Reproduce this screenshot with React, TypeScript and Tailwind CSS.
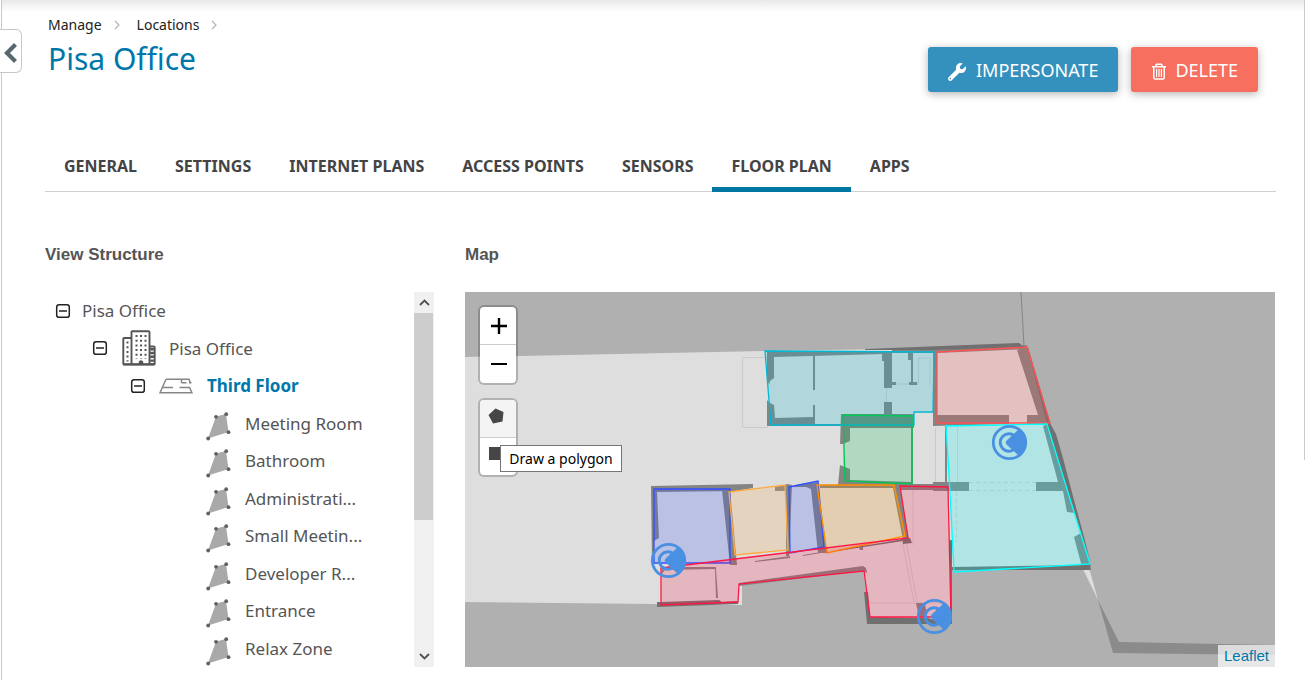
import React from 'react';
import { FaWrench } from 'react-icons/fa';

const tabs = [
  'General',
  'Settings',
  'Internet Plans',
  'Access Points',
  'Sensors',
  'Floor Plan',
  'Apps',
];

const rooms = [
  'Meeting Room',
  'Bathroom',
  'Administrati...',
  'Small Meetin...',
  'Developer R...',
  'Entrance',
  'Relax Zone',
];

// room outlines, in floor plan units
const areas = [
  { color: '#00b8d4', points: '765,351 934,352 933,412 914,412 914,425 771,425' },
  { color: '#00c853', points: '843,415 912,416 912,484 845,481' },
  { color: '#ff5252', points: '937,352 1027,347 1050,423 937,423' },
  { color: '#00ffff', points: '946,426 1047,424 1090,564 954,572 950,492' },
  { color: '#304ffe', points: '654,489 730,489 730,563 654,563' },
  { color: '#ffab40', points: '729,492 785,485 788,550 735,555' },
  { color: '#304ffe', points: '789,487 818,481 824,547 790,553' },
  { color: '#ff9100', points: '817,485 894,485 905,536 827,553' },
  {
    color: '#ff1744',
    points:
      '661,568 908,538 900,486 948,487 951,617 870,617 864,571 739,584 738,602 661,605',
  },
];

const walls = [
  // north-west block
  '767,351 884,351 884,354 774,357 774,378 770,381 769,385 767,378',
  '767,400 770,403 774,405 775,418 813,417 815,426 767,426',
  '813,356 815,356 815,390 813,390',
  '813,405 815,405 815,426 813,426',
  '815,424 845,424 845,426 815,426',
  '882,352 892,352 892,388 884,388 884,361 882,361',
  '884,402 892,402 892,416 884,416',
  '892,350 937,349 937,353 892,353',
  '908,353 913,353 913,385 917,385 917,383 909,383 911,383 911,360 908,360',
  '892,382 896,382 896,385 892,385',
  '909,382 917,382 917,385 909,385',
  // bathroom block
  '841,414 914,414 914,428 850,428 850,441 843,444 840,444',
  '840,465 845,467 850,469 850,480 912,482 912,486 838,485',
  '911,428 913,428 913,484 911,484',
  // north-east block
  '933,350 1027,345 1027,349 937,353 937,415 1009,415 1009,424 933,426',
  '1017,350 1027,347 1050,422 1050,425 1027,424 1027,415 1038,415',
  '945,426 947,426 947,484 945,484',
  '933,482 969,482 969,491 933,491',
  '1043,426 1048,424 1075,513 1067,512 1063,491 1036,491 1036,482 1058,482',
  '1074,537 1081,533 1091,566 1082,567',
  // south-west block
  '651,486 753,484 753,488 735,491 657,492 659,538 654,541 654,563 652,563',
  '722,490 730,489 737,565 730,565',
  '775,487 788,484 792,485 789,556 786,556 786,491 775,491',
  '789,487 800,484 818,482 827,553 818,553 811,489 806,487',
  '820,485 900,484 900,488 909,540 903,540 893,488 820,488',
  '900,484 948,484 948,490 900,490',
  // corridor
  '663,567 716,567 716,569 665,570 661,575',
  '715,569 716,569 718,598 716,598',
  '755,561 790,556 790,558 755,562',
  '803,555 827,551 827,552 803,556',
  '859,547 863,547 863,550 860,550',
  '916,603 925,603 927,617 919,617',
  '739,583 863,566 866,568 867,573 862,571 739,586',
];

const darkWalls = [
  '865,349 1019,343 1024,347 937,350 865,350',
  '1027,347 1028,347 1051,425 1056,434 1063,458 1074,500 1083,533 1091,564 1047,424',
  '951,567 1090,565 1091,570 952,570',
  '657,602 661,602 719,600 722,602 738,601 738,604 657,607',
  '864,592 868,592 870,617 928,618 940,621 952,618 952,624 867,624',
  '950,540 952,540 952,620 950,620',
  '838,550 910,538 912,543 903,544 903,541 838,551',
];

const markers = [
  [1009, 442],
  [668, 560],
  [934, 616],
];

const ToggleIcon: React.FC = () => (
  <svg className="size-4" viewBox="0 0 16 16" fill="none" stroke="#222">
    <rect x="1.7" y="1.7" width="12.6" height="12.6" rx="2.4" strokeWidth="1.5" />
    <path d="M4 8h8" strokeWidth="1.5" />
  </svg>
);

const BuildingIcon: React.FC = () => (
  <svg className="h-9 w-[34px]" viewBox="0 0 34 36" fill="none" stroke="#555">
    <path
      d="M9.5 34V2.2q0-1 1-1h16q1 0 1 1V34M9.5 8H2.3q-1 0-1 1v24.5q0 1 1 1h29.4q1 0 1-1V17.5q0-1-1-1h-4.2M9.5 8v26"
      strokeWidth="1.9"
    />
    <path d="M14.5 5v24M19 5v24M23.5 5v24" strokeWidth="2" strokeDasharray="2 2.7" />
    <path d="M5.5 11.5v20" strokeWidth="2" strokeDasharray="2 2.7" />
    <path d="M30 18v16" strokeWidth="3.8" strokeDasharray="2.4 1.4" />
    <path d="M17 34.5v-3q2-2 4 0v3z" fill="#555" strokeWidth="0.5" />
    <path d="M1 34.3h32" strokeWidth="2" />
  </svg>
);

const FloorIcon: React.FC = () => (
  <svg className="h-4 w-[34px]" viewBox="0 0 34 16" fill="none" stroke="#858585">
    <path
      d="M7 1.2H30l1.5 4M7 1.2L1 14.8h32l-2.5-5.3H20.5M4 9.5h10M22.5 1.2v3.5M22.5 4.8h5M30 4.8h2.5"
      strokeWidth="1.5"
    />
  </svg>
);

const RoomIcon: React.FC = () => (
  <svg className="h-[29px] w-[26px]" viewBox="0 0 26 29">
    <path d="M10 4.5L20 2l2.5 18L2 26.5z" fill="#a9a9a9" />
    <g fill="#606060">
      <circle cx="10" cy="4.8" r="1.9" />
      <circle cx="20.2" cy="2.2" r="1.9" />
      <circle cx="22.5" cy="20.2" r="1.9" />
      <circle cx="2.2" cy="26.5" r="1.9" />
    </g>
  </svg>
);

const TrashIcon: React.FC = () => (
  <svg className="h-[17px] w-4" viewBox="0 0 16 17" fill="none" stroke="white">
    <path d="M1 3.8h14M5 3.5V2.3q0-1 1-1h4q1 0 1 1v1.2" strokeWidth="1.6" />
    <path d="M2.8 4v10.7q0 1.4 1.4 1.4h7.6q1.4 0 1.4-1.4V4" strokeWidth="1.5" />
    <path d="M5.6 6v8M8 6v8M10.4 6v8" strokeWidth="1.2" />
  </svg>
);

const Crumb: React.FC<{ text: string }> = ({ text }) => (
  <li className="flex items-center">
    <a href="#">{text}</a>
    <svg className="ml-3 mr-[17px] h-2.5 w-1.5" viewBox="0 0 6 10" fill="none" stroke="#b5b5b5">
      <path d="M1 1l4 4-4 4" strokeWidth="1.2" />
    </svg>
  </li>
);

const FloorMap: React.FC = () => (
  <svg
    className="block h-full w-full"
    viewBox="465 292 810 375"
    preserveAspectRatio="xMinYMin slice"
    role="img"
    aria-label="Third floor plan"
  >
    <rect x="465" y="292" width="1600" height="375" fill="#b0b0b0" />
    <path d="M1021 292l3 54" stroke="#858585" />
    <polygon
      points="465,357 765,351 1026,347 1090,566 1084,569 952,570 952,622 870,622 863,569 742,584 742,605 655,604 465,602"
      fill="#dedede"
    />
    <polygon points="1083,569 1089,568 1098,600" fill="#dedede" />
    <polygon points="1098,600 1119,642 1275,645 1275,655 1113,653" fill="#8b8b8b" />
    <g fill="none" stroke="#cacaca">
      <path d="M768 357.5H742.5v70H768" />
      <path d="M918.5 385v-27H930v27M935.5 428v54M957.5 427v55" />
      <path d="M969 482.5h67M969 490.5h67M956.5 492v50" strokeDasharray="4 3" />
      <path d="M902 540l12 62M906 540l11 62M869 603h78M913 490v55" />
      <path d="M896 384h13M886.5 388v14M843.5 444v22" />
    </g>
    <g fill="#848484">
      {walls.map((points) => (
        <polygon key={points} points={points} />
      ))}
    </g>
    <g fill="#707070">
      {darkWalls.map((points) => (
        <polygon key={points} points={points} />
      ))}
    </g>
    {areas.map((area) => (
      <polygon
        key={area.points}
        points={area.points}
        fill={area.color}
        fillOpacity="0.2"
        stroke={area.color}
        strokeWidth="1.3"
      />
    ))}
    {markers.map(([x, y]) => (
      <g key={x} transform={`translate(${x} ${y})`} fill="none" stroke="#4a90e2">
        <circle cx="0.5" cy="0.5" r="16.2" strokeWidth="2.8" />
        <path d="M5.5-6.2A8.7 8.7 0 1 0 5.5 7.2" strokeWidth="3" />
        <path
          d="M-1.8-1.7L10.5-13A17 17 0 0 1 10.5 14L-1.8 2.7Q-4 0.5-1.8-1.7z"
          fill="#4a90e2"
          strokeWidth="0.8"
        />
      </g>
    ))}
  </svg>
);

const MapControls: React.FC = () => (
  <div className="absolute left-[13px] top-[13px] flex flex-col gap-[13px]">
    <div className="flex flex-col rounded-md border-2 border-black/20 bg-white bg-clip-padding">
      <button
        aria-label="Zoom in"
        className="flex h-[38px] w-9 items-center justify-center border-b border-[#ccc]"
      >
        <svg className="ml-0.5 size-4" viewBox="0 0 16 16" stroke="black" strokeWidth="2.4">
          <path d="M0 8h16M8 0v16" />
        </svg>
      </button>
      <button aria-label="Zoom out" className="flex h-[38px] w-9 items-center justify-center">
        <svg className="ml-0.5 size-4" viewBox="0 0 16 16" stroke="black" strokeWidth="2">
          <path d="M0 8h16" />
        </svg>
      </button>
    </div>
    <div className="relative flex flex-col rounded-md border-2 border-black/20 bg-white bg-clip-padding">
      <button
        aria-label="Draw a polygon"
        className="flex h-[38px] w-9 items-center rounded-t border-b border-[#ccc] bg-[#f4f4f4] pl-2"
      >
        <svg className="mb-1.5 size-4" viewBox="0 0 16 16" fill="#464646">
          <path d="M7.5 0.5L15.5 4l-1 9.5L5 15.5 0.5 7z" />
        </svg>
      </button>
      <button
        aria-label="Draw a rectangle"
        className="flex h-[37px] w-9 items-center pl-2"
      >
        <svg className="mb-1.5 size-4" viewBox="0 0 16 16" fill="#464646">
          <rect x="1" y="1" width="13" height="13" />
        </svg>
      </button>
      <div
        role="tooltip"
        className="absolute left-5 top-[45px] flex h-[27px] w-[122px] items-center justify-center whitespace-nowrap border border-[#767676] bg-white text-[14px] text-black"
      >
        Draw a polygon
      </div>
    </div>
  </div>
);

const StructureTree: React.FC = () => (
  <div className="flex h-[375px]">
    <ul className="grid flex-1 auto-rows-fr text-[17px] text-[#555]">
      <li className="flex items-center pl-2.5">
        <button aria-label="Collapse Pisa Office location" className="mr-[11px]">
          <ToggleIcon />
        </button>
        Pisa Office
      </li>
      <li className="flex items-center pl-[47px]">
        <button aria-label="Collapse Pisa Office building" className="mr-3.5">
          <ToggleIcon />
        </button>
        <BuildingIcon />
        <span className="ml-[13px]">Pisa Office</span>
      </li>
      <li className="flex items-center pl-[85px]">
        <button aria-label="Collapse Third Floor" className="mr-[13px]">
          <ToggleIcon />
        </button>
        <FloorIcon />
        <a href="#" className="ml-3.5 font-bold text-[#0077ab]">
          Third Floor
        </a>
      </li>
      {rooms.map((room) => (
        <li key={room} className="flex items-center pl-[161px]">
          <span className="mt-1.5">
            <RoomIcon />
          </span>
          <span className="ml-[13px]">{room}</span>
        </li>
      ))}
    </ul>
    {/* scrollbar */}
    <div className="flex w-5 flex-col bg-[#f0f0f0]">
      <button aria-label="Scroll up" className="flex h-[21px] items-center justify-center">
        <svg className="h-[7px] w-[11px]" viewBox="0 0 11 7" fill="none" stroke="#505050">
          <path d="M1 6l4.5-4.5L10 6" strokeWidth="1.8" />
        </svg>
      </button>
      <div className="mr-px h-[207px] bg-[#cdcdcd]" />
      <button
        aria-label="Scroll down"
        className="mt-auto flex h-[21px] items-center justify-center"
      >
        <svg className="h-[7px] w-[11px]" viewBox="0 0 11 7" fill="none" stroke="#505050">
          <path d="M1 1l4.5 4.5L10 1" strokeWidth="1.8" />
        </svg>
      </button>
    </div>
  </div>
);

const App: React.FC = () => {
  return (
    <div className="relative ml-px min-h-screen border-l border-[#c3c9cc] bg-white pb-3 font-['Noto_Sans',sans-serif]">
      <div className="absolute inset-x-0 top-0 h-3 bg-linear-to-b from-[#e9e9e9] to-white" />
      <div className="absolute right-0 top-0 h-[460px] w-px bg-[#ccc]" />
      {/* sidebar handle */}
      <button
        aria-label="Open sidebar"
        className="absolute -left-0.5 top-[29px] flex h-11 w-[22px] items-center rounded-r-md border border-l-0 border-[#c3c9cc] bg-white pl-1 pt-1"
      >
        <svg className="h-5 w-3.5" viewBox="0 0 14 20" fill="none" stroke="#57686f">
          <path d="M11.5 1.5L3 10l8.5 8.5" strokeWidth="4.2" />
        </svg>
      </button>
      <div className="relative pl-[43px] pr-[29px]">
        <header className="flex justify-between">
          <div className="pl-[3px] pt-[15px]">
            <nav aria-label="Breadcrumb">
              <ol className="flex text-[14px] leading-5 text-[#222]">
                <Crumb text="Manage" />
                <Crumb text="Locations" />
              </ol>
            </nav>
            <h1 className="mt-1.5 text-[30px] leading-9 text-[#0077ab]">Pisa Office</h1>
          </div>
          <div className="mr-[18px] mt-[47px] flex h-[45px] gap-[13px] text-[18px] text-white">
            <button className="flex items-center rounded-[3px] bg-[#3490bd] px-5 pt-0.5 shadow-[0_2px_8px_rgba(0,0,0,0.3)]">
              <FaWrench className="mr-2.5 mt-0.5 size-[18px]" />
              IMPERSONATE
            </button>
            <button className="flex items-center rounded-[3px] bg-[#f76f5f] px-5 pt-0.5 shadow-[0_2px_8px_rgba(0,0,0,0.3)]">
              <span className="mr-2 mt-0.5">
                <TrashIcon />
              </span>
              DELETE
            </button>
          </div>
        </header>
        <nav
          aria-label="Location sections"
          className="mt-12 flex h-[52px] border-b border-[#d0d0d0] text-[16px] font-bold uppercase text-[#444]"
        >
          {tabs.map((tab) => (
            <a
              key={tab}
              href="#"
              className={
                tab === 'Floor Plan'
                  ? 'flex h-[52px] items-center border-b-5 border-[#0077a2] px-[19px] pt-1'
                  : 'flex h-[52px] items-center px-[19px] pb-px'
              }
            >
              {tab}
            </a>
          ))}
        </nav>
        <main className="mt-[51px] flex gap-[31px]">
          <section className="w-[389px] shrink-0">
            <h2 className="mb-[25px] font-['Liberation_Sans',sans-serif] text-[17px] font-bold leading-6 text-[#555]">
              View Structure
            </h2>
            <StructureTree />
          </section>
          <section className="min-w-0 flex-1">
            <h2 className="mb-[25px] font-['Liberation_Sans',sans-serif] text-[17px] font-bold leading-6 text-[#555]">
              Map
            </h2>
            <div className="relative mr-px h-[375px] overflow-hidden bg-[#b0b0b0]">
              <FloorMap />
              <MapControls />
              <a
                href="#"
                className="absolute bottom-0 right-0 bg-white/70 px-1.5 font-['Liberation_Sans',sans-serif] text-[15px] leading-[22px] text-[#0078a8]"
              >
                Leaflet
              </a>
            </div>
          </section>
        </main>
      </div>
    </div>
  );
};

export default App;
